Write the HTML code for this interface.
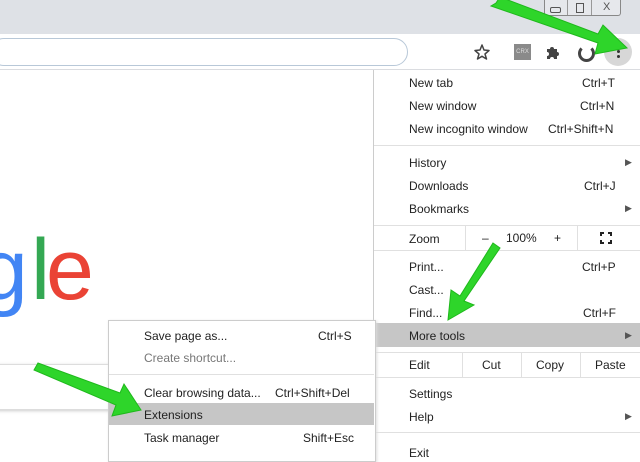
<!DOCTYPE html>
<html><head><style>
body{margin:0;width:640px;height:449px;overflow:hidden;position:relative;background:#fff;font-family:"Liberation Sans",sans-serif;font-size:12px;color:#222}
.a{position:absolute}
.t{position:absolute;white-space:nowrap;line-height:14px}
.sep{position:absolute;height:1px;background:#e0e0e0}
.G{position:absolute;font-size:86px;line-height:86px;top:227px}
</style></head><body>
<div class="a" style="left:0;top:0;width:640px;height:34px;background:#dee1e6"></div>
<div class="a" style="left:544px;top:-1px;width:75px;height:16px;border:1px solid #888;border-top:none;border-radius:0 0 3px 3px;background:#e6e8ec"></div>
<div class="a" style="left:567px;top:0;width:1px;height:15px;background:#999"></div>
<div class="a" style="left:591px;top:0;width:1px;height:15px;background:#999"></div>
<div class="a" style="left:550px;top:7px;width:9px;height:4px;border:1px solid #555;border-radius:2px"></div>
<div class="a" style="left:576px;top:3px;width:6px;height:8px;border:1px solid #555"></div>
<div class="t" style="left:603px;top:0;font-size:11px;color:#555">X</div>
<div class="a" style="left:-10px;top:38px;width:416px;height:26px;border:1px solid #b8c8d8;border-radius:14px;background:#fff"></div>
<svg class="a" style="left:474px;top:44px" width="16" height="16"><polygon points="8,1 10,6 15,6.5 11,10 12.5,15 8,12.3 3.5,15 5,10 1,6.5 6,6" fill="none" stroke="#444" stroke-width="1.5" stroke-linejoin="round"/></svg>
<div class="a" style="left:514px;top:44px;width:17px;height:16px;background:#8a8a8a;color:#ddd;font-size:6px;line-height:16px;text-align:center">CRX</div>
<svg class="a" style="left:545px;top:44px" width="16" height="16"><path d="M2 5h3a2 2 0 1 1 4 0h3v3a2 2 0 1 1 0 4v3H9a2 2 0 1 0-4 0H2v-3a2 2 0 1 0 0-4z" fill="#444"/></svg>
<div class="a" style="left:578px;top:45px;width:11px;height:11px;border:3px solid #444;border-radius:50%;border-top-color:transparent"></div>
<div class="a" style="left:604px;top:38px;width:28px;height:28px;border-radius:50%;background:#d7d7d7"></div>
<div class="a" style="left:617px;top:45px;width:3px;height:3px;background:#333;border-radius:50%;box-shadow:0 5px #333,0 10px #333"></div>
<div class="a" style="left:0;top:69px;width:640px;height:1px;background:#dadce0"></div>
<!-- google -->
<div class="G" style="left:-20px;color:#4285f4">g</div>
<div class="G" style="left:31px;color:#34a853">l</div>
<div class="G" style="left:46px;color:#ea4335">e</div>
<div class="a" style="left:-10px;top:364px;width:120px;height:44px;border:1px solid #ddd;box-shadow:0 1px 3px #ccc"></div>
<!-- main menu -->
<div class="a" style="left:373px;top:70px;width:270px;height:390px;background:#fff;border-left:1px solid #ccc"></div>
<div class="t" style="left:409px;top:76px">New tab</div><div class="t" style="left:582px;top:76px">Ctrl+T</div>
<div class="t" style="left:409px;top:99px">New window</div><div class="t" style="left:580px;top:99px">Ctrl+N</div>
<div class="t" style="left:409px;top:122px">New incognito window</div><div class="t" style="left:548px;top:122px">Ctrl+Shift+N</div>
<div class="sep" style="left:374px;top:145px;width:266px"></div>
<div class="t" style="left:409px;top:156px">History</div><div class="t" style="left:625px;top:155px;font-size:9px;color:#555">▶</div>
<div class="t" style="left:409px;top:179px">Downloads</div><div class="t" style="left:584px;top:179px">Ctrl+J</div>
<div class="t" style="left:409px;top:202px">Bookmarks</div><div class="t" style="left:625px;top:201px;font-size:9px;color:#555">▶</div>
<div class="sep" style="left:374px;top:225px;width:266px"></div>
<div class="t" style="left:409px;top:232px">Zoom</div>
<div class="a" style="left:465px;top:226px;width:1px;height:24px;background:#e0e0e0"></div>
<div class="t" style="left:482px;top:231px">–</div><div class="t" style="left:506px;top:231px">100%</div><div class="t" style="left:554px;top:231px">+</div>
<div class="a" style="left:577px;top:226px;width:1px;height:24px;background:#e0e0e0"></div>
<div class="a" style="left:600px;top:232px;width:12px;height:12px;border:2px solid #222;box-sizing:border-box"></div>
<div class="a" style="left:604px;top:230px;width:4px;height:16px;background:#fff"></div>
<div class="a" style="left:598px;top:236px;width:16px;height:4px;background:#fff"></div>
<div class="sep" style="left:374px;top:250px;width:266px"></div>
<div class="t" style="left:409px;top:260px">Print...</div><div class="t" style="left:582px;top:260px">Ctrl+P</div>
<div class="t" style="left:409px;top:283px">Cast...</div>
<div class="t" style="left:409px;top:306px">Find...</div><div class="t" style="left:583px;top:306px">Ctrl+F</div>
<div class="a" style="left:376px;top:323px;width:264px;height:24px;background:#c6c6c6"></div>
<div class="t" style="left:409px;top:329px">More tools</div><div class="t" style="left:625px;top:328px;font-size:9px;color:#555">▶</div>
<div class="sep" style="left:374px;top:352px;width:266px"></div>
<div class="t" style="left:409px;top:358px">Edit</div>
<div class="a" style="left:462px;top:353px;width:1px;height:24px;background:#e0e0e0"></div>
<div class="t" style="left:482px;top:358px">Cut</div>
<div class="a" style="left:521px;top:353px;width:1px;height:24px;background:#e0e0e0"></div>
<div class="t" style="left:536px;top:358px">Copy</div>
<div class="a" style="left:580px;top:353px;width:1px;height:24px;background:#e0e0e0"></div>
<div class="t" style="left:595px;top:358px">Paste</div>
<div class="sep" style="left:374px;top:377px;width:266px"></div>
<div class="t" style="left:409px;top:387px">Settings</div>
<div class="t" style="left:409px;top:410px">Help</div><div class="t" style="left:625px;top:409px;font-size:9px;color:#555">▶</div>
<div class="sep" style="left:374px;top:432px;width:266px"></div>
<div class="t" style="left:409px;top:446px">Exit</div>
<!-- submenu -->
<div class="a" style="left:108px;top:320px;width:266px;height:140px;background:#fff;border:1px solid #ccc;box-shadow:1px 1px 3px #ddd"></div>
<div class="t" style="left:144px;top:329px">Save page as...</div><div class="t" style="left:318px;top:329px">Ctrl+S</div>
<div class="t" style="left:144px;top:351px;color:#777">Create shortcut...</div>
<div class="sep" style="left:109px;top:374px;width:265px"></div>
<div class="t" style="left:144px;top:386px">Clear browsing data...</div><div class="t" style="left:275px;top:386px">Ctrl+Shift+Del</div>
<div class="a" style="left:109px;top:403px;width:265px;height:22px;background:#c6c6c6"></div>
<div class="t" style="left:144px;top:408px">Extensions</div>
<div class="t" style="left:144px;top:431px">Task manager</div><div class="t" style="left:303px;top:431px">Shift+Esc</div>
<!-- arrows -->
<svg class="a" style="left:0;top:0" width="640" height="449">
<g fill="#2ed52a" stroke="#1fb81c" stroke-width="1">
<polygon points="496,3 500,-3 598,34 603,25 627,48 595,54 598,43 491,6"/>
<polygon points="493,243 500,248 464,301 474,305 448,320 451,290 460,296"/>
<polygon points="34,370 38,363 120,393 124,384 141,410 112,416 116,405"/>
</g></svg>
</body></html>
